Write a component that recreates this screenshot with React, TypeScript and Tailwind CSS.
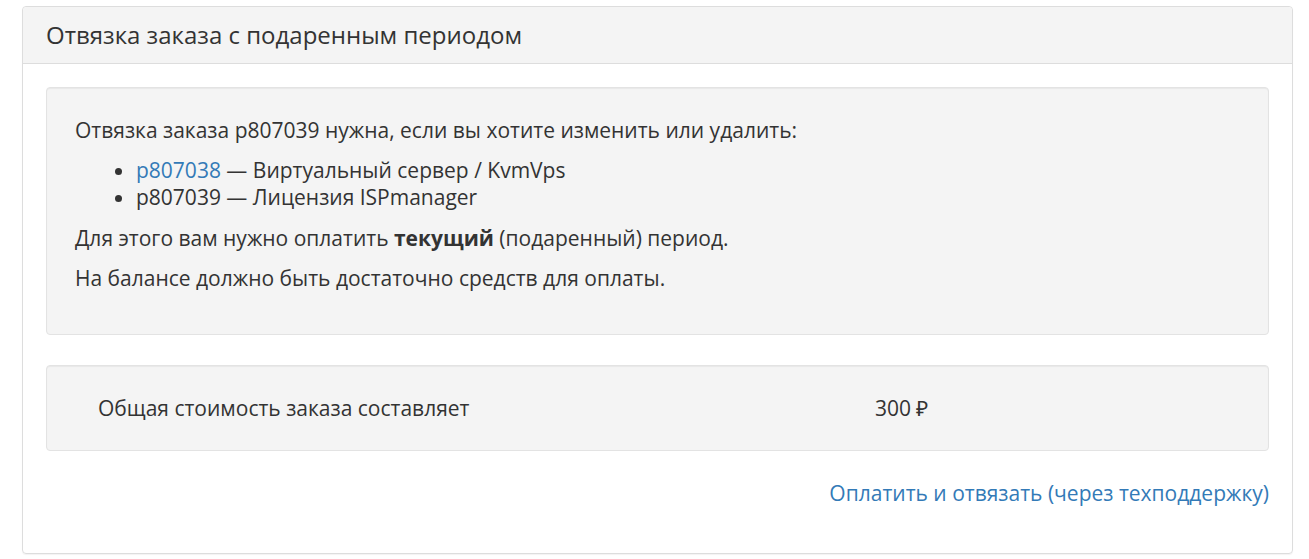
import React from "react";

export default function App() {
  return (
    <div className="w-[1309px] h-[559px] bg-white pt-[6px] pl-[22px] pr-[16px]" style={{ fontFamily: '"Open Sans", sans-serif' }}>
      <div className="border border-[#dddddd] rounded-[4px] shadow-[0_1px_1px_rgba(0,0,0,0.05)] h-[548px] text-[#333333]">
        <div className="bg-[#f4f4f4] border-b border-[#dddddd] rounded-t-[4px] h-[57px] flex items-center pl-[23px]">
          <h3 className="text-[24px] leading-[30px] text-[#333333]">Отвязка заказа с подаренным периодом</h3>
        </div>
        <div className="px-[23px] pt-[23px]">
          <div className="bg-[#f4f4f4] border border-[#e3e3e3] rounded-[4px] shadow-[inset_0_1px_1px_rgba(0,0,0,0.05)] h-[248px] pl-[28px] pt-[29px] text-[21px] leading-[27px]">
            <p>Отвязка заказа p807039 нужна, если вы хотите изменить или удалить:</p>
            <ul className="list-disc pl-[61px] mt-[13px]">
              <li><a className="text-[#337ab7]">p807038</a> — Виртуальный сервер / KvmVps</li>
              <li>p807039 — Лицензия ISPmanager</li>
            </ul>
            <p className="mt-[14px]">Для этого вам нужно оплатить <b>текущий</b> (подаренный) период.</p>
            <p className="mt-[13px]">На балансе должно быть достаточно средств для оплаты.</p>
          </div>
          <div className="mt-[30px] bg-[#f4f4f4] border border-[#e3e3e3] rounded-[4px] shadow-[inset_0_1px_1px_rgba(0,0,0,0.05)] h-[86px] flex items-center text-[21px] leading-[27px]">
            <div className="w-[828px] pl-[51px]">Общая стоимость заказа составляет</div>
            <div>300 ₽</div>
          </div>
          <div className="flex justify-end mt-[29px] text-[21px] leading-[27px]">
            <a className="text-[#337ab7]">Оплатить и отвязать (через техподдержку)</a>
          </div>
        </div>
      </div>
    </div>
  );
}
